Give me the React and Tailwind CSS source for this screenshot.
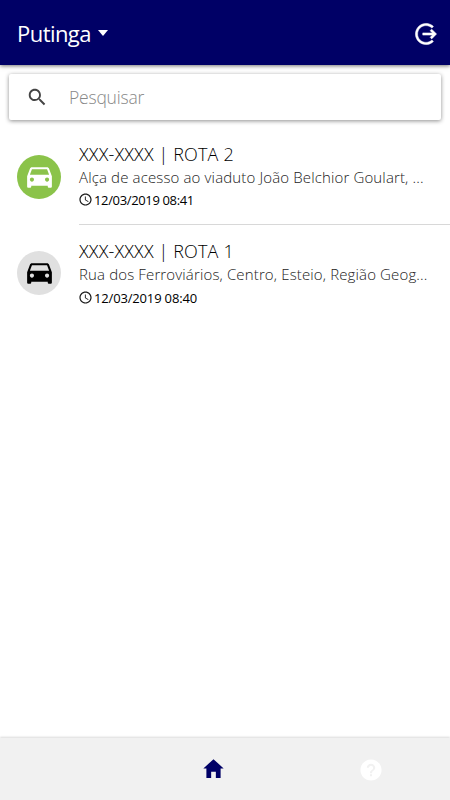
import { useState } from 'react';
import {
  IoMdCar,
  IoMdHelpCircle,
  IoMdHome,
  IoMdLogOut,
  IoMdSearch,
  IoMdTime,
} from 'react-icons/io';

const vehicles = [
  {
    id: 2,
    title: 'XXX-XXXX | ROTA 2',
    address: 'Alça de acesso ao viaduto João Belchior Goulart, ...',
    date: '12/03/2019 08:41',
    active: true,
    dateSpacing: 'tracking-[-0.35px]',
  },
  {
    id: 1,
    title: 'XXX-XXXX | ROTA 1',
    address: 'Rua dos Ferroviários, Centro, Esteio, Região Geog...',
    date: '12/03/2019 08:40',
    active: false,
    dateSpacing: 'tracking-[-0.16px]',
  },
];

function Header() {
  return (
    <header className="relative z-10 flex h-[65px] items-center justify-between bg-[#000066] pr-[11px] pl-[17px] pt-[2px] text-white shadow-[0_1px_4px_rgba(0,0,0,0.55)]">
      <button className="flex items-center gap-[7px]">
        <span className="-mt-[2px] text-[22px] leading-7 tracking-[-0.55px]">
          Putinga
        </span>
        <span className="-mt-[2px] h-0 w-0 border-x-[5.5px] border-t-[6px] border-x-transparent border-t-white" />
      </button>
      <button>
        <IoMdLogOut className="h-[26px] w-[26px] stroke-white stroke-[10px]" />
      </button>
    </header>
  );
}

function SearchBar({ value, onChange }) {
  return (
    <div className="mx-[9px] mt-[9px] flex h-[46px] items-center rounded-[2px] bg-white pl-[17px] shadow-[0_1px_4px_rgba(0,0,0,0.45)]">
      <IoMdSearch className="h-[22px] w-[22px] text-[#444]" />
      <input
        className="ml-[21px] min-w-0 flex-1 text-[17.5px] font-light tracking-[-0.2px] text-black outline-none placeholder:text-[#888]"
        placeholder="Pesquisar"
        value={value}
        onChange={(e) => onChange(e.target.value)}
      />
    </div>
  );
}

function VehicleItem({ data }) {
  return (
    <li className="group flex h-[97px] pl-[17px]">
      <div
        className={`mt-[27px] flex h-11 w-11 shrink-0 items-center justify-center rounded-full group-last:mt-[26px] ${
          data.active ? 'bg-[#8bc34a] text-white' : 'bg-[#e0e0e0] text-black'
        }`}
      >
        <IoMdCar className="h-[33px] w-[33px]" />
      </div>
      <div className="ml-[18px] min-w-0 flex-1 border-b border-[#d8d8d8] pt-[14px] whitespace-nowrap group-last:border-transparent">
        <h2 className="text-[18px] leading-6 font-light tracking-[0.15px] text-black">
          {data.title}
        </h2>
        <p className="text-[15px] leading-[22px] font-light tracking-[0.14px] text-[#222]">
          {data.address}
        </p>
        <p className="flex items-center gap-[1px] text-[13px] leading-6 text-black group-last:mt-[1px]">
          <IoMdTime className="-mt-[2px] -ml-[1px] h-[15px] w-[15px]" />
          <span className={data.dateSpacing}>{data.date}</span>
        </p>
      </div>
    </li>
  );
}

function TabBar() {
  return (
    <nav className="h-[62px] bg-[#f1f1f1] shadow-[0_-1px_2px_rgba(0,0,0,0.15)]">
      <div className="flex h-full items-center justify-between pr-[66px] pl-[201px]">
        <IoMdHome className="-mt-[2px] h-[25px] w-[25px] text-[#000066]" />
        <IoMdHelpCircle className="mt-[2px] h-[26px] w-[26px] text-white" />
      </div>
    </nav>
  );
}

export default function App() {
  const [search, setSearch] = useState('');

  return (
    <div className="flex h-screen w-full flex-col overflow-hidden bg-white font-['Open_Sans','Noto_Sans',sans-serif]">
      <Header />
      <SearchBar value={search} onChange={setSearch} />
      <ul className="mt-[8px] flex-1">
        {vehicles.map((data) => (
          <VehicleItem key={data.id} data={data} />
        ))}
      </ul>
      <TabBar />
    </div>
  );
}
